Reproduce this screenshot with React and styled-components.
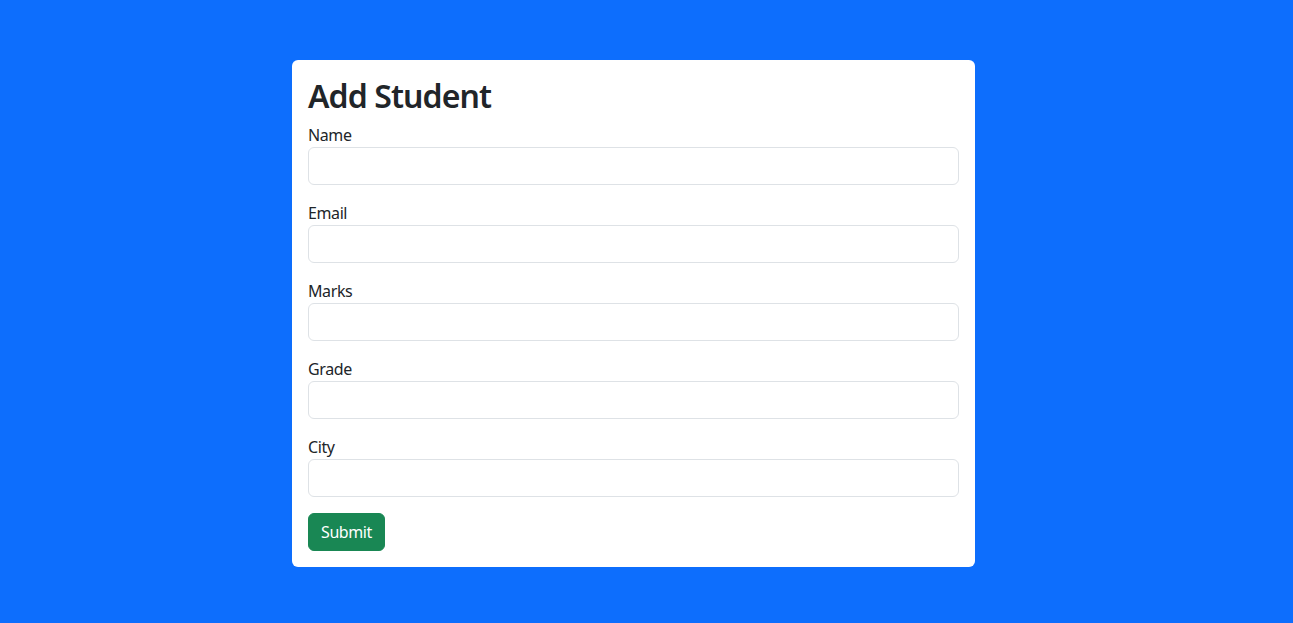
import React, { useState } from 'react';
import styled, { createGlobalStyle } from 'styled-components';

const GlobalStyle = createGlobalStyle`
  * {
    box-sizing: border-box;
  }
  body {
    margin: 0;
    background-color: #0d6efd;
    font-family: 'Noto Sans', 'Liberation Sans', sans-serif;
    color: #212529;
  }
`;

const fields = ['Name', 'Email', 'Marks', 'Grade', 'City'];

const App = () => {
  const [values, setValues] = useState({});

  const handleChange = (key) => (e) => {
    setValues({ ...values, [key]: e.target.value });
  };

  return (
    <>
      <GlobalStyle />
      <Page>
        <FormCard onSubmit={(e) => e.preventDefault()}>
          <Title>Add Student</Title>
          {fields.map((field) => (
            <FieldGroup key={field}>
              <Label htmlFor={field}>{field}</Label>
              <Input id={field} value={values[field] || ''} onChange={handleChange(field)} />
            </FieldGroup>
          ))}
          <SubmitButton type='submit'>Submit</SubmitButton>
        </FormCard>
      </Page>
    </>
  );
};

const Page = styled.div`
  min-height: 623px;
  padding: 60px 0 0 292px;
  background-color: #0d6efd;
`;

const FormCard = styled.form`
  display: flex;
  flex-direction: column;
  align-items: flex-start;
  width: 683px;
  padding: 16px;
  background-color: white;
  border-radius: 6px;
`;

const Title = styled.h2`
  margin: 0 0 8px;
  font-size: 32px;
  font-weight: 600;
  line-height: 39px;
  letter-spacing: -0.9px;
`;

const FieldGroup = styled.div`
  display: flex;
  flex-direction: column;
  width: 100%;
  margin-bottom: 16px;
`;

const Label = styled.label`
  font-size: 16px;
  line-height: 24px;
  letter-spacing: -0.4px;
`;

const Input = styled.input`
  width: 100%;
  height: 38px;
  padding: 6px 12px;
  font-size: 16px;
  font-family: inherit;
  color: #212529;
  border: 1px solid #dee2e6;
  border-radius: 6px;
  outline: none;
`;

const SubmitButton = styled.button`
  height: 38px;
  padding: 6px 12px;
  font-size: 16px;
  font-family: inherit;
  line-height: 24px;
  letter-spacing: -0.4px;
  color: white;
  background-color: #198754;
  border: 1px solid #198754;
  border-radius: 6px;
  cursor: pointer;
`;

export default App;
